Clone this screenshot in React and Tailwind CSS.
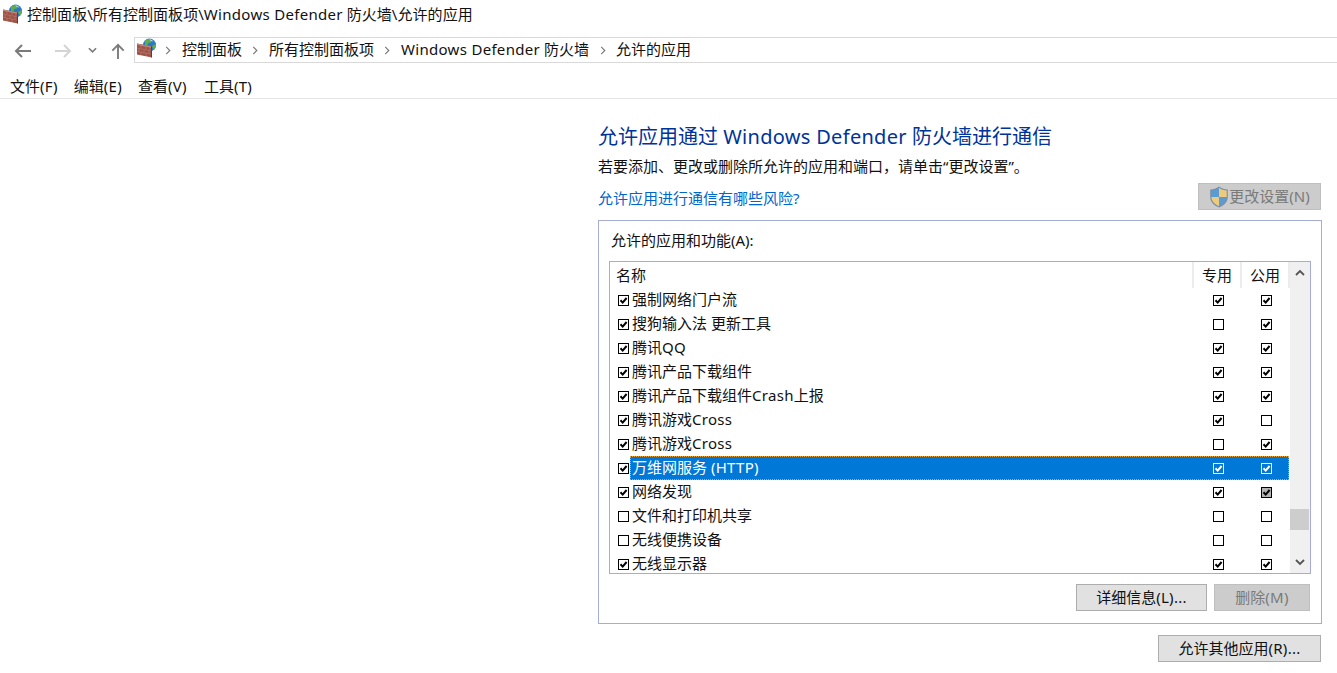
const FONT = "font-['Noto_Sans','Noto_Sans_CJK_SC',sans-serif]";

function FirewallIcon({ className }) {
  return (
    <svg viewBox="0 0 22 22" className={className}>
      <circle cx="14.500" cy="7" r="6.500" fill="#2a78c8" />
      <path d="M10 2.500c2-1.500 5-1.800 7-.5l-1 2.500-3 .5-.5 3L10 7z" fill="#62ad4c" />
      <path d="M17 8l3.500-2 .5 3-2 3z" fill="#62ad4c" />
      <path d="M14 1c2 .5 3.500 1.500 4.500 2.500L16 3z" fill="#bfe0f5" />
      <path d="M2 5.500l15 3v11l-15-3z" fill="#9f5145" />
      <path d="M2 5.500l15 3V10L2 7z" fill="#bd8476" />
      <path d="M2 10l15 3M2 13.300l15 3M6 6.500v3.500M11 7.500v3.500M15 8.500v3.500M4 10.500v3M9 11.500v3M14 12.500v3M6 14v3M11 15v3" stroke="#bd8a7c" strokeWidth="0.500" fill="none" />
      <path d="M17 8.500v11l-1-.2V8.300z" fill="#743529" />
    </svg>
  );
}

function Shield() {
  return (
    <svg viewBox="0 0 18 20" className="w-[20px] h-[22px] shrink-0 -mr-[1px]">
      <path d="M9 0.500C6.500 2.300 4 3 1 3.200V10c0 4.500 3.500 7.800 8 9.500 4.500-1.700 8-5 8-9.500V3.200C14 3 11.500 2.300 9 .5z" fill="#7a8fa8" />
      <path d="M9 1.700V10H2V4.200C4.700 4 7 3.300 9 1.700z" fill="#5c9ad2" />
      <path d="M9 1.700V10h7V4.200C13.300 4 11 3.300 9 1.700z" fill="#eccb7d" />
      <path d="M9 10v8.300C5.200 16.700 2.200 14 2 10z" fill="#eccb7d" />
      <path d="M9 10v8.300c3.800-1.600 6.800-4.300 7-8.300z" fill="#5c9ad2" />
    </svg>
  );
}

function Check({ checked, dim, selected }) {
  return (
    <span
      className={`w-[11px] h-[11px] border shrink-0 flex items-center justify-center ${selected ? "border-white" : "border-black"} ${dim ? "bg-[#b4b4b4]" : selected ? "bg-transparent" : "bg-white"}`}
    >
      {checked ? (
        <svg viewBox="0 0 9 9" className="w-[9px] h-[9px]">
          <path d="M1.500 4.200L3.700 6.600 7.600 2" fill="none" stroke={selected ? "#fff" : "#000"} strokeWidth="2" />
        </svg>
      ) : null}
    </span>
  );
}

const L = ({ children }) => <span className="tracking-[0.3px]">{children}</span>;

const rows = [
  [<>强制网络门户流</>, 1, 1, 1],
  [<>搜狗输入法 更新工具</>, 1, 0, 1],
  [<>腾讯<L>QQ</L></>, 1, 1, 1],
  [<>腾讯产品下载组件</>, 1, 1, 1],
  [<>腾讯产品下载组件<L>Crash</L>上报</>, 1, 1, 1],
  [<>腾讯游戏<L>Cross</L></>, 1, 1, 0],
  [<>腾讯游戏<L>Cross</L></>, 1, 0, 1],
  [<>万维网服务 <L>(HTTP)</L></>, 1, 1, 1, "sel"],
  [<>网络发现</>, 1, 1, 1, "dim"],
  [<>文件和打印机共享</>, 0, 0, 0],
  [<>无线便携设备</>, 0, 0, 0],
  [<>无线显示器</>, 1, 1, 1],
];

function Row({ name, on, priv, pub, flag }) {
  const sel = flag === "sel";
  return (
    <div className="h-6 flex items-center shrink-0 pr-[1px]">
      <div className="w-[20px] pl-[8px] flex shrink-0">
        <Check checked={on} />
      </div>
      <div className={`flex-1 h-6 flex items-center ${sel ? "bg-[#0078d7] text-white outline-1 outline-dotted -outline-offset-1 outline-[#e8a33d]" : ""}`}>
        <span className="pl-[2px] pb-[2px] flex-1 whitespace-nowrap">{name}</span>
        <div className="w-[48px] flex pl-[20px]">
          <Check checked={priv} selected={sel} />
        </div>
        <div className="w-[48px] flex pl-[20px]">
          <Check checked={pub} selected={sel} dim={flag === "dim"} />
        </div>
      </div>
    </div>
  );
}

function Btn({ children, disabled, className = "" }) {
  return (
    <div
      className={`h-[27px] flex items-center justify-center border whitespace-nowrap ${disabled ? "bg-[#cccccc] border-[#bfbfbf] text-[#7a7a7a]" : "bg-[#e1e1e1] border-[#adadad] text-[#111]"} ${className}`}
    >
      {children}
    </div>
  );
}

function Chevron({ className = "" }) {
  return (
    <svg viewBox="0 0 6 10" className={`w-[6px] h-[9px] shrink-0 ${className}`}>
      <path d="M1 1l4 4-4 4" fill="none" stroke="#7a7a7a" strokeWidth="1.300" />
    </svg>
  );
}

export default function App() {
  return (
    <div className={`${FONT} w-[1337px] h-[673px] overflow-hidden bg-white text-[#111] text-[15px] flex flex-col`}>
      <div className="h-[30px] flex items-center pl-[1px] gap-[4px] shrink-0">
        <FirewallIcon className="w-[22px] h-[22px]" />
        <span className="whitespace-nowrap leading-none pb-[2px] tracking-[0.05px]">控制面板\所有控制面板项\<L>Windows Defender</L> 防火墙\允许的应用</span>
      </div>
      <div className="h-[26px] mt-[7px] flex items-center shrink-0">
        <div className="w-[134px] flex items-center shrink-0">
          <svg viewBox="0 0 18 16" className="w-[18px] h-[16px] ml-[14px] mt-[1px]">
            <path d="M17 8H2M8 2L2 8l6 6" fill="none" stroke="#7a7a7a" strokeWidth="2" />
          </svg>
          <svg viewBox="0 0 18 16" className="w-[18px] h-[16px] ml-[22px] mt-[1px]">
            <path d="M1 8h15M10 2l6 6-6 6" fill="none" stroke="#d4d4d4" strokeWidth="2" />
          </svg>
          <svg viewBox="0 0 10 6" className="w-[9px] h-[6px] ml-[16px]">
            <path d="M1 1l4 4 4-4" fill="none" stroke="#7a7a7a" strokeWidth="1.800" />
          </svg>
          <svg viewBox="0 0 14 18" className="w-[14px] h-[17px] ml-[14px] mt-[3px]">
            <path d="M7 17V2M1 8l6-6 6 6" fill="none" stroke="#7a7a7a" strokeWidth="2" />
          </svg>
        </div>
        <div className="flex-1 h-[26px] border border-[#d9d9d9] border-r-0 flex items-center whitespace-nowrap">
          <FirewallIcon className="w-[22px] h-[22px] -mt-[3px]" />
          <Chevron className="ml-[8px] mr-[11px]" />
          <span className="pb-[2px]">控制面板</span>
          <Chevron className="ml-[10px] mr-[11px]" />
          <span className="pb-[2px]">所有控制面板项</span>
          <Chevron className="ml-[10px] mr-[11px]" />
          <span className="pb-[2px]"><L>Windows Defender</L> 防火墙</span>
          <Chevron className="ml-[11px] mr-[10px]" />
          <span className="pb-[2px]">允许的应用</span>
        </div>
      </div>
      <div className="h-[36px] flex items-center pl-[10px] gap-[16px] border-b border-[#e5e5e5] shrink-0 pt-[12px] whitespace-nowrap">
        <span>文件<L>(F)</L></span>
        <span>编辑<L>(E)</L></span>
        <span>查看<L>(V)</L></span>
        <span className="ml-[1px]">工具<L>(T)</L></span>
      </div>
      <div className="flex-1 pl-[598px] pr-[15px] flex flex-col">
        <div className="text-[20px] leading-[28px] text-[#003399] mt-[24px] whitespace-nowrap">允许应用通过 <L>Windows Defender</L> 防火墙进行通信</div>
        <div className="leading-[20px] mt-[5px] whitespace-nowrap">若要添加、更改或删除所允许的应用和端口，请单击“更改设置”。</div>
        <div className="flex items-start justify-between mt-[7px] h-[37px]">
          <span className="text-[#0066cc] leading-[20px] mt-[5px]">允许应用进行通信有哪些风险?</span>
          <Btn disabled className="w-[123px] mr-[1px]">
            <Shield />
            <span className="ml-[1px]">更改设置(N)</span>
          </Btn>
        </div>
        <div className="h-[404px] w-[724px] border border-[#a6acd6] px-[10px] flex flex-col">
          <div className="h-[40px] pt-[9px] pl-[2px] leading-[20px] whitespace-nowrap">允许的应用和功能(A):</div>
          <div className="h-[313px] w-[702px] border border-[#a6acd6] flex overflow-hidden">
            <div className="flex-1 flex flex-col min-w-0 overflow-hidden">
              <div className="h-[26px] flex shrink-0">
                <div className="flex-1 pl-[6px] pt-[1px] flex items-center">名称</div>
                <div className="w-[48px] border-l-2 border-[#ececec] pt-[1px] flex items-center justify-center">专用</div>
                <div className="w-[50px] border-x-2 border-[#ececec] pt-[1px] flex items-center justify-center">公用</div>
              </div>
              {rows.map(([name, on, priv, pub, flag], i) => (
                <Row key={i} name={name} on={on} priv={priv} pub={pub} flag={flag} />
              ))}
            </div>
            <div className="w-[20px] bg-[#f0f0f0] flex flex-col items-center shrink-0">
              <svg viewBox="0 0 10 7" className="w-[10px] h-[7px] mt-[7px] shrink-0">
                <path d="M1 6l4-4 4 4" fill="none" stroke="#555" strokeWidth="1.800" />
              </svg>
              <div className="w-[19px] h-[21px] bg-[#cdcdcd] mt-[233px] self-start shrink-0" />
              <svg viewBox="0 0 10 7" className="w-[10px] h-[7px] mt-[29px] shrink-0">
                <path d="M1 1l4 4 4-4" fill="none" stroke="#555" strokeWidth="1.800" />
              </svg>
            </div>
          </div>
          <div className="flex justify-end gap-[7px] mt-[10px] mr-[1px]">
            <Btn className="w-[131px]">详细信息<L>(L)...</L></Btn>
            <Btn disabled className="w-[96px]">删除<L>(M)</L></Btn>
          </div>
        </div>
        <div className="flex justify-end mt-[11px]">
          <Btn className="w-[163px] mr-[1px]">允许其他应用<L>(R)...</L></Btn>
        </div>
      </div>
    </div>
  );
}
